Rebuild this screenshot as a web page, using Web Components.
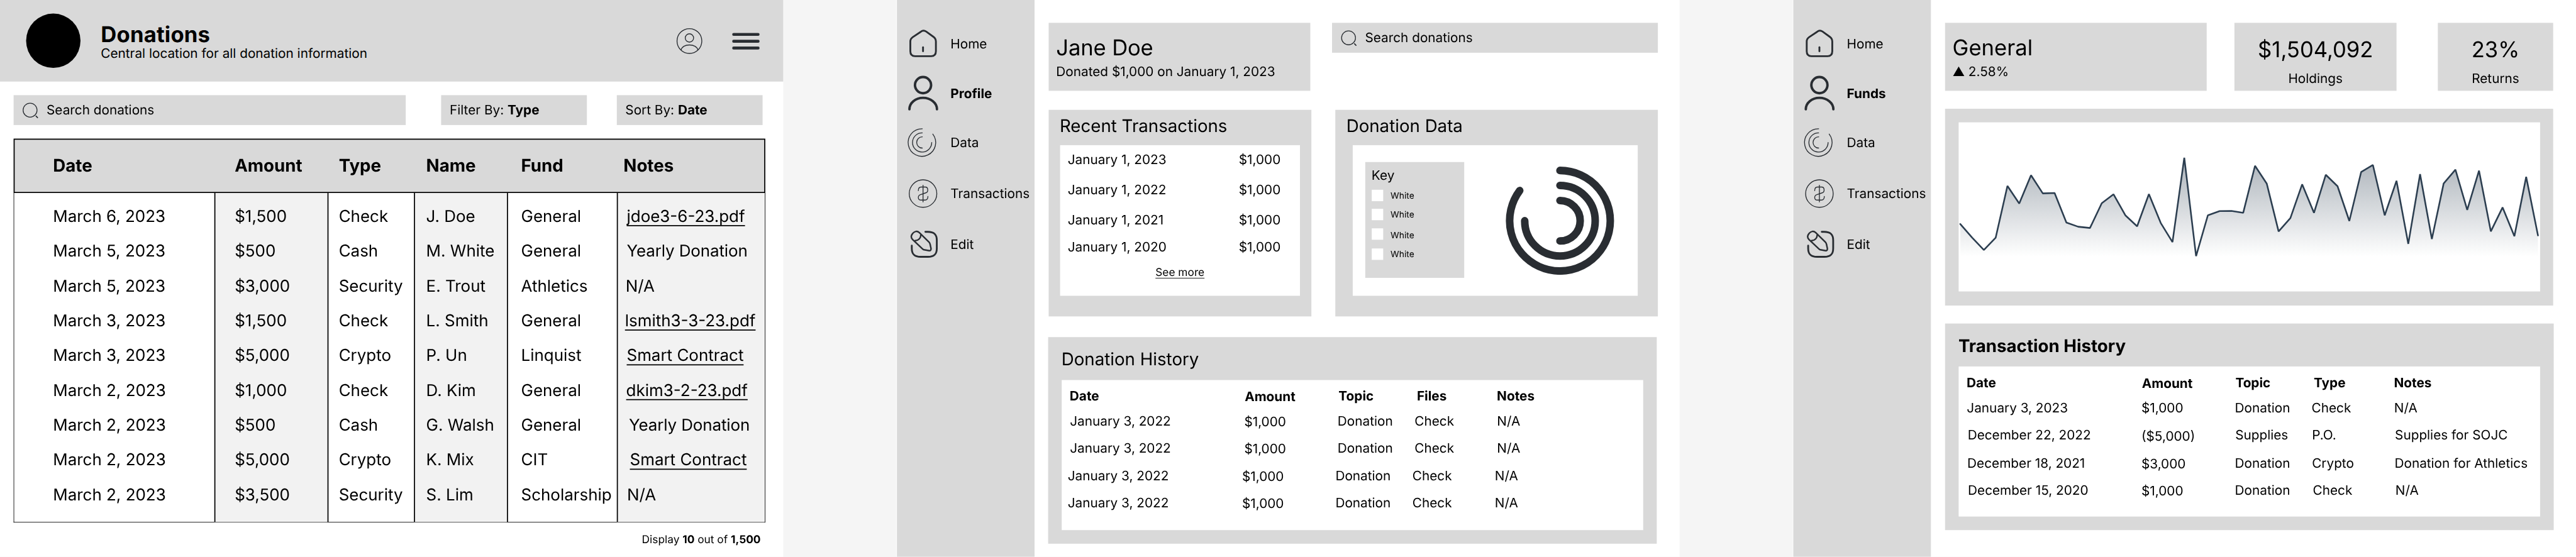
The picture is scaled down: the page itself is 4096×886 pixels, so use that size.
<!DOCTYPE html>
<html lang="en">
<head>
<meta charset="utf-8">
<title>Donations wireframes</title>
<style>
  html, body { margin: 0; background: #f5f5f5; overflow: hidden; }
  body { width: 4096px; height: 886px; font-family: Inter, "Liberation Sans", sans-serif; color: #000; }
</style>
</head>
<body>
<wireframe-board></wireframe-board>

<script>
const INK = '#292D32';

/* Base class: puts markup and styles in an open shadow root. */
class Part extends HTMLElement {
  connectedCallback() {
    if (this.shadowRoot) return;
    const root = this.attachShadow({ mode: 'open' });
    root.innerHTML = `<style>
      *, *::before { box-sizing: border-box; }
      :host { display: block; box-sizing: border-box; white-space: nowrap; }
      svg { display: block; flex: none; }
      ${this.css()}
    </style>${this.html()}`;
  }
  css() { return ''; }
  html() { return '<slot></slot>'; }
}

/* ---------- icons ---------- */
const ICONS = {
  home: { box: '15 18 180 210', w: 60, h: 70, body: `
    <g stroke-width="10"><path d="M99 55Q113 44 128 54L168 83Q182 93 182 109V163Q182 190 156 190H67Q41 190 41 163V109Q41 94 54 85Z"/>
    <path d="M111 141V163"/></g>` },
  person: { box: '15 291 180 210', w: 60, h: 70, body: `
    <g stroke-width="13.5"><circle cx="111" cy="349.5" r="44.5"/>
    <path d="M36 483C36 448 69 420 111 420S188 448 188 483"/></g>` },
  data: { box: '15 564 180 210', w: 60, h: 70, body: `
    <g stroke-width="4.7"><path d="M107 590.5A76 76 0 1 0 165 620"/>
    <path d="M107 613A53 53 0 1 0 159 666"/><path d="M107 635A31 31 0 0 0 107 697"/></g>` },
  dollar: { box: '15 843 180 210', w: 60, h: 70, body: `
    <g stroke-width="4.7"><circle cx="111" cy="948" r="76"/><path d="M111 902V994"/>
    <path d="M85 932C85 919 92 912 101 912H123C133 912 137 919 137 928C137 939 133 942 126 944L97 954C88 957 85 962 85 970C85 979 91 984 100 984H122C132 984 138 976 138 964"/></g>` },
  edit: { box: '15 1125 180 210', w: 60, h: 70, body: `
    <path stroke-width="10" d="M124 1159H137C172 1159 187 1173 187 1206V1250C187 1283 172 1297 138 1297H98C64 1297 49 1283 49 1250V1235"/>
    <g stroke-width="8.5"><path d="M53 1201C43 1190 44 1179 54 1168C65 1155 79 1153 90 1163L144 1216Q149 1221 150 1228L155 1251Q156 1264 145 1263L121 1259Q113 1258 108 1253Z"/>
    <path d="M68 1208C85 1207 98 1195 99 1177"/></g>` },
  search: { box: '41 188 30 30', w: 30, h: 30, body: `
    <circle cx="55.3" cy="202.6" r="12.8" stroke-width="1.5"/><path stroke-width="2" d="M66.3 213.6L69 216.3"/>` },
  account: { box: '1241 50 51 51', w: 51, h: 51, body: `
    <g stroke-width="1.6"><circle cx="1266.5" cy="75.5" r="22.8"/><circle cx="1266.5" cy="69.8" r="7.7"/>
    <path d="M1251.3 91.8C1252.5 86.4 1258.5 82.7 1266.5 82.7S1280.8 86.4 1282 91.8"/></g>` },
  menu: { box: '0 0 51 32', w: 51, h: 32, body: `
    <path stroke-width="5.4" d="M2.8 3.3H47.8M2.8 15.9H47.8M2.8 28.4H47.8"/>` }
};
customElements.define('line-icon', class extends Part {
  css() { return ':host { flex: none; }'; }
  html() {
    const i = ICONS[this.getAttribute('name')];
    return `<svg width="${i.w}" height="${i.h}" viewBox="${i.box}" fill="none" stroke="${INK}"
      stroke-linecap="round" stroke-linejoin="round">${i.body}</svg>`;
  }
});

/* ---------- shared controls ---------- */
customElements.define('search-bar', class extends Part {
  css() { return `:host { display: flex; align-items: center; height: 55px; padding-left: 16px;
    background: #d9d9d9; font-size: 24px; line-height: 30px; }
    span { margin: 1px 0 0 14.6px; }`; }
  html() { return `<line-icon name="search"></line-icon><span>Search donations</span>`; }
});

customElements.define('option-box', class extends Part {
  css() { return `:host { width: 268px; height: 55px; padding-left: 15.7px; background: #d9d9d9;
    font-size: 24px; line-height: 56px; }`; }
});

/* ---------- screen 1 ---------- */
customElements.define('app-header', class extends Part {
  css() { return `:host { display: flex; align-items: center; height: 150px; padding: 0 43.5px 0 48px; background: #d9d9d9; }
    .logo { width: 100px; height: 100px; border-radius: 50%; background: #000; }
    .titles { flex: 1; align-self: flex-start; margin: 41px 0 0 37.3px; }
    h1 { margin: 0; font-size: 40px; line-height: 44px; letter-spacing: .25px; }
    p { margin: 0; font-size: 24px; line-height: 26px; }
    .account { margin-right: 52.5px; }
    line-icon { margin-top: 1px; }`; }
  html() { return `<div class="logo"></div>
    <div class="titles"><h1>Donations</h1><p>Central location for all donation information</p></div>
    <line-icon class="account" name="account"></line-icon><line-icon name="menu"></line-icon>`; }
});

/* Notes cells: text, indent, kind (1 = link, 2 = tightened). */
const COLUMNS = [
  { title: 'Date', w: 368, pad: 71.4, cells: ['March 6, 2023', 'March 5, 2023', 'March 5, 2023', 'March 3, 2023', 'March 3, 2023', 'March 2, 2023', 'March 2, 2023', 'March 2, 2023', 'March 2, 2023'] },
  { title: 'Amount', w: 208, pad: 35.5, cells: ['$1,500', '$500', '$3,000', '$1,500', '$5,000', '$1,000', '$500', '$5,000', '$3,500'] },
  { title: 'Type', w: 158.5, pad: 18.8, cells: ['Check', 'Cash', 'Security', 'Check', 'Crypto', 'Check', 'Cash', 'Crypto', 'Security'] },
  { title: 'Name', w: 171, pad: 21, cells: ['J. Doe', 'M. White', 'E. Trout', 'L. Smith', 'P. Un', 'D. Kim', 'G. Walsh', 'K. Mix', 'S. Lim'] },
  { title: 'Fund', w: 202, pad: 24.5, cells: ['General', 'General', 'Athletics', 'General', 'Linquist', 'General', 'General', 'CIT', 'Scholarship'] },
  { title: 'Notes', w: 272.5, pad: 10.7, cells: [['jdoe3-6-23.pdf', 6, 1], ['Yearly Donation', 6, 2], ['N/A', 4], ['lsmith3-3-23.pdf', 2.8, 1], ['Smart Contract', 6, 1], ['dkim3-2-23.pdf', 5, 1], ['Yearly Donation', 10, 2], ['Smart Contract', 11.8, 1], ['N/A', 6.5]] }
];
customElements.define('donations-table', class extends Part {
  css() { return `:host { width: 1382px; }
    .head { display: flex; align-items: center; height: 100px;
      border: 2px solid #000; background: #d9d9d9; font-weight: 700; font-size: 32px; line-height: 40px; }
    .head div { flex: none; }
    .head div:first-child { margin-left: -1px; }
    .body { display: flex; height: 606px; border: 1px solid #000; border-top: 0; background: #fff; }
    .col { flex: none; padding-top: 11px; font-size: 30px; line-height: 64px; }
    .col + .col { border-left: 2px solid #000; }
    .col:nth-child(even) { background: #f2f2f2; }
    .tight { letter-spacing: -.13px; }
    u { text-decoration: underline 2px; text-underline-offset: 6px; text-decoration-skip-ink: none; }`; }
  html() {
    const cell = c => Array.isArray(c)
      ? `<div${c[2] == 2 ? ' class="tight"' : ''} style="padding-left:${c[1]}px">${c[2] == 1 ? `<u>${c[0]}</u>` : c[0]}</div>` : `<div>${c}</div>`;
    return `<div class="head">${COLUMNS.map((c, i) =>
      `<div style="width:${i == 5 ? 266 : c.w}px;padding-left:${c.pad + (i ? 2 : 0)}px">${c.title}</div>`).join('')}</div>
      <div class="body">${COLUMNS.map(c =>
      `<div class="col" style="width:${c.w}px;padding-left:${c.pad}px">${c.cells.map(cell).join('')}</div>`).join('')}</div>`;
  }
});

customElements.define('donations-screen', class extends Part {
  css() { return `:host { width: 1440px; height: 1024px; background: #fff; }
    .tools { display: flex; margin: 25px 0 25px 25px; }
    search-bar { width: 721px; margin-right: 65px; }
    option-box + option-box { margin-left: 55px; }
    donations-table { margin-left: 25px; }
    footer { margin: 18px 41.5px 0 0; text-align: right; font-size: 20px; line-height: 26px; }`; }
  html() { return `<app-header></app-header>
    <div class="tools"><search-bar></search-bar><option-box>Filter By: <b>Type</b></option-box><option-box>Sort By: <b>Date</b></option-box></div>
    <donations-table></donations-table>
    <footer>Display <b>10</b> out of <b>1,500</b></footer>`; }
});

/* ---------- side navigation ---------- */
customElements.define('side-nav', class extends Part {
  css() { return `:host { flex: none; width: 253px; height: 1024px; margin-left: 1px; padding: 46px 0 0 16px; background: #d9d9d9;
      font-size: 24px; line-height: 30px; }
    .item { display: flex; align-items: center; height: 70px; }
    .item span { margin-left: 22.4px; }
    .active { font-weight: 700; }`; }
  html() {
    const items = [['home', 'Home', 0], ['person', this.getAttribute('active'), 21], ['data', 'Data', 21],
      ['dollar', 'Transactions', 23], ['edit', 'Edit', 24]];
    return items.map(([i, t, m]) => `<div class="item${i == 'person' ? ' active' : ''}" style="margin-top:${m}px">
      <line-icon name="${i}"></line-icon><span>${t}</span></div>`).join('');
  }
});

/* ---------- cards ---------- */
customElements.define('title-card', class extends Part {
  css() { return `:host { width: 481px; height: 125px; padding: 22px 0 0 13.7px; background: #d9d9d9; }
    .t { font-size: 40px; line-height: 48px; }
    .s { margin-top: 5px; font-size: 24px; line-height: 30px; }`; }
  html() { return `<div class="t"><slot name="title"></slot></div><div class="s"><slot></slot></div>`; }
});

customElements.define('stat-card', class extends Part {
  css() { return `:host { height: 125px; padding-top: 25px; background: #d9d9d9; text-align: center; }
    .v { font-size: 40px; line-height: 48px; }
    .l { margin-top: 15px; font-size: 24px; line-height: 30px; }`; }
  html() { return `<div class="v">${this.getAttribute('value')}</div><div class="l"><slot></slot></div>`; }
});

customElements.define('recent-card', class extends Part {
  css() { return `:host { width: 483px; height: 380px; padding-top: 10px; background: #d9d9d9; }
    h2 { margin: 0 0 15px 20.2px; font-weight: 400; font-size: 32px; line-height: 40px; }
    .sheet { width: 441px; height: 276.5px; margin-left: 21px; padding: 12px 0 0 14px; background: #fff; font-size: 24px; line-height: 30px; }
    .row { display: grid; grid-template-columns: 314.5px auto; }
    .more { margin: 19px 0 0 161.3px; font-size: 20px; line-height: 26px; text-decoration: underline;
      text-decoration-thickness: 1.3px; text-underline-offset: 3px; text-decoration-skip-ink: none; }`; }
  html() {
    return `<h2>Recent Transactions</h2><div class="sheet">
      ${[['2023', 25], ['2022', 26], ['2021', 19], ['2020', 0]].map(([y, m]) =>
        `<div class="row" style="margin-bottom:${m}px"><span>January 1, ${y}</span><span>$1,000</span></div>`).join('')}
      <div class="more">See more</div></div>`;
  }
});

customElements.define('data-key', class extends Part {
  css() { return `:host { width: 182px; height: 213px; padding: 10px 0 0 11.6px; background: #d9d9d9; }
    .k { font-size: 24px; line-height: 30px; margin-bottom: 11px; }
    .r { display: flex; align-items: flex-start; height: 21px; font-size: 16px; line-height: 20px; }
    i { width: 21px; height: 21px; margin-right: 14px; background: #fff; }`; }
  html() {
    return `<div class="k">Key</div>${[[14, 0], [15, 0], [16, 2], [0, 0]].map(([m, d]) =>
      `<div class="r" style="margin-bottom:${m}px"><i></i><span style="padding-top:${d}px">White</span></div>`).join('')}`;
  }
});

customElements.define('ring-chart', class extends Part {
  html() { return `<svg width="200" height="200" viewBox="-100 -100 200 200" fill="none" stroke="${INK}" stroke-width="13.9" stroke-linecap="round">
    <path d="M0-92.5A92.5 92.5 0 1 1-74-55.5"/><path d="M0-64.8A64.8 64.8 0 1 1-64.8 0"/><path d="M0-37.2A37.2 37.2 0 0 1 0 37.2"/></svg>`; }
});

customElements.define('data-card', class extends Part {
  css() { return `:host { width: 593px; height: 380px; padding-top: 10px; background: #d9d9d9; }
    h2 { margin: 0 0 15px 20.2px; font-weight: 400; font-size: 32px; line-height: 40px; }
    .sheet { display: flex; align-items: flex-start; width: 524px; height: 276.5px; margin-left: 32px; background: #fff; }
    data-key { margin: 31px 0 0 23px; }
    ring-chart { margin: 38.5px 0 0 76.3px; }`; }
  html() { return `<h2>Donation Data</h2><div class="sheet"><data-key></data-key><ring-chart></ring-chart></div>`; }
});

/* Each row: top gap, column offsets, texts, extra drop of the amount cell. */
const HISTORY = {
  donation: [
    [0, [14.6, 336.4, 508.9, 652.9, 800], ['Date', 'Amount', 'Topic', 'Files', 'Notes'], 1],
    [16, [15, 335.5, 507.2, 648.7, 800.2], ['January 3, 2022', '$1,000', 'Donation', 'Check', 'N/A'], 1],
    [20, [15, 335.5, 507.2, 648.7, 800.2], ['January 3, 2022', '$1,000', 'Donation', 'Check', 'N/A'], 1],
    [20, [11, 331.5, 503.2, 644.7, 796.2], ['January 3, 2022', '$1,000', 'Donation', 'Check', 'N/A'], 1],
    [20, [11, 331.5, 503.2, 644.7, 796.2], ['January 3, 2022', '$1,000', 'Donation', 'Check', 'N/A'], 1]
  ],
  transaction: [
    [0, [14.6, 336.9, 508.8, 652.9, 800.3], ['Date', 'Amount', 'Topic', 'Type', 'Notes'], 1],
    [16, [15, 336, 507.8, 648.8, 800.7], ['January 3, 2023', '$1,000', 'Donation', 'Check', 'N/A'], 1],
    [20, [16.5, 336, 508.5, 649.6, 802.1], ['December 22, 2022', '($5,000)', 'Supplies', 'P.O.', 'Supplies for SOJC'], 2],
    [22, [15.9, 336, 507.8, 649.6, 801.4], ['December 18, 2021', '$3,000', 'Donation', 'Crypto', 'Donation for Athletics'], 1],
    [20, [17, 336, 507.8, 651.1, 802.9], ['December 15, 2020', '$1,000', 'Donation', 'Check', 'N/A'], 1]
  ]
};
customElements.define('history-card', class extends Part {
  css() { return `:host { width: 1119px; height: 380px; padding-top: 21px; background: #d9d9d9; }
    h2 { margin: 0 0 18px 24.5px; font-weight: var(--title-weight, 400); font-size: 32px; line-height: 40px; }
    .sheet { width: 1069px; height: 276px; margin-left: 25px; padding-top: 15px; background: #fff; font-size: 24px; line-height: 30px; }
    .row { display: grid; height: 30px; }
    .row:first-child { font-weight: 700; }`; }
  html() {
    return `<h2><slot></slot></h2><div class="sheet">${HISTORY[this.getAttribute('rows')].map(([gap, xs, texts, drop]) => {
      const cols = xs.slice(1).map((x, i) => (x - xs[i]).toFixed(1) + 'px').join(' ') + ' auto';
      return `<div class="row" style="margin:${gap}px 0 0 ${xs[0]}px;grid-template-columns:${cols}">${
        texts.map((t, i) => `<span${i == 1 ? ` style="padding-top:${drop}px"` : ''}>${t}</span>`).join('')}</div>`;
    }).join('')}</div>`;
  }
});

customElements.define('area-chart', class extends Part {
  css() { return `:host { width: 1118px; height: 362px; padding: 25px 0 0 25px; background: #d9d9d9; }
    svg { background: #fff; }`; }
  html() {
    const ys = [412, 437, 459.8, 437.3, 342, 374.3, 322.3, 355.7, 355, 409.3, 417, 419.3, 373.7, 357.3, 396, 416.3, 357,
      410, 445.3, 290, 471, 396, 388.3, 388, 391.3, 305, 338, 425.6, 401, 339, 391.5, 321.5, 342.5, 406.4, 316.5, 303.5,
      396, 332.5, 448.5, 320.3, 439.7, 337.5, 312, 386, 313.8, 425.6, 381.5, 434.4, 325.3, 433];
    const pts = ys.map((y, i) => `${(3 + i * 21.675).toFixed(2)} ${(y - 225).toFixed(1)}`);
    return `<svg width="1069" height="311" viewBox="0 0 1069 311">
      <defs><linearGradient id="fade" gradientUnits="userSpaceOnUse" x1="0" y1="64" x2="0" y2="247">
        <stop offset="0" stop-color="#2C3E50" stop-opacity=".4"/><stop offset="1" stop-color="#2C3E50" stop-opacity="0"/>
      </linearGradient></defs>
      <path d="M3 247L${pts.join('L')}V247Z" fill="url(#fade)"/>
      <path d="M${pts.join('L')}" fill="none" stroke="#2C3E50" stroke-width="3" stroke-linejoin="bevel" stroke-linecap="round"/></svg>`;
  }
});

/* ---------- screens 2 and 3 ---------- */
const SCREEN_CSS = `:host { display: flex; width: 1440px; height: 1024px; background: #fff; }
  main { padding: 42px 0 0 26px; }
  .row { display: flex; align-items: flex-start; }`;

customElements.define('profile-screen', class extends Part {
  css() { return SCREEN_CSS + `
    search-bar { width: 599px; margin-left: 40px; }
    [slot] { letter-spacing: -.15px; }
    .mid { margin-top: 35px; }
    data-card { margin-left: 44px; }
    history-card { margin: 38px 0 0 -1px; }`; }
  html() { return `<side-nav active="Profile"></side-nav><main>
    <div class="row"><title-card><span slot="title">Jane Doe</span>Donated $1,000 on January 1, 2023</title-card><search-bar></search-bar></div>
    <div class="row mid"><recent-card></recent-card><data-card></data-card></div>
    <history-card rows="donation">Donation History</history-card></main>`; }
});

customElements.define('funds-screen', class extends Part {
  css() { return SCREEN_CSS + `
    .holdings { width: 298px; margin-left: 51px; }
    .returns { width: 212px; margin-left: 76px; }
    area-chart { margin-top: 33px; }
    history-card { margin-top: 33px; --title-weight: 700; }
    .up { font-size: 22.7px; margin-right: -.5px; }`; }
  html() { return `<side-nav active="Funds"></side-nav><main>
    <div class="row"><title-card><span slot="title">General</span><span class="up">▲</span> 2.58%</title-card>
      <stat-card class="holdings" value="$1,504,092">Holdings</stat-card><stat-card class="returns" value="23%">Returns</stat-card></div>
    <area-chart></area-chart>
    <history-card rows="transaction">Transaction History</history-card></main>`; }
});

customElements.define('wireframe-board', class extends Part {
  css() { return `:host { width: 4096px; height: 886px; overflow: hidden; background: #f5f5f5; }
    .stage { display: flex; gap: 208px; width: 4736px; height: 1024px;
      transform: scale(.864865); transform-origin: 0 0; text-rendering: geometricPrecision; }
    .stage > * { flex: none; }`; }
  html() { return `<div class="stage"><donations-screen></donations-screen><profile-screen></profile-screen><funds-screen></funds-screen></div>`; }
});
</script>
</body>
</html>
